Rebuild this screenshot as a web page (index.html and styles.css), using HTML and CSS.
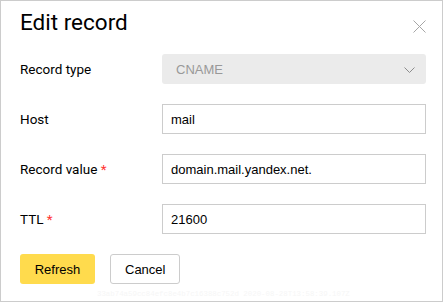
FILE: index.html
```html
<!DOCTYPE html>
<html>
<head>
<meta charset="utf-8">
<link rel="stylesheet" href="styles.css">
</head>
<body>
<div class="dialog">
  <div class="head">
    <h1 class="title">Edit record</h1>
    <button class="close" aria-label="Close">
      <svg width="13" height="13" viewBox="0 0 13 13"><path d="M0.5 0.5L12.5 12.5M12.5 0.5L0.5 12.5" stroke="#a6a6a6" stroke-width="1" fill="none"/></svg>
    </button>
  </div>
  <div class="form">
    <label class="label">Record type</label>
    <div class="select">
      <span class="select-text">CNAME</span>
      <svg class="chev" width="11" height="6" viewBox="0 0 11 6"><path d="M0.5 0.5L5.5 5.5L10.5 0.5" stroke="#8c8c8c" stroke-width="1" fill="none"/></svg>
    </div>
    <label class="label">Host</label>
    <div class="input">mail</div>
    <label class="label">Record value <span class="req">*</span></label>
    <div class="input">domain.mail.yandex.net.</div>
    <label class="label">TTL <span class="req">*</span></label>
    <div class="input">21600</div>
  </div>
  <div class="actions">
    <button class="btn btn-primary">Refresh</button>
    <button class="btn btn-default">Cancel</button>
  </div>
  <div class="stamp">33ab74a59cc84efc8e4b7c16388c752d 2020-08-28T13:58:39.107Z</div>
</div>
</body>
</html>
```
FILE: styles.css
```css
html, body {
  margin: 0;
  padding: 0;
  background: #fff;
}
.dialog {
  box-sizing: border-box;
  width: 443px;
  height: 302px;
  border: 1px solid #cccccc;
  padding: 8px 16px 0 19px;
  font-family: Roboto, "Liberation Sans", sans-serif;
  color: #000;
  position: relative;
}
.head {
  display: flex;
  justify-content: space-between;
  align-items: flex-start;
  height: 45px;
}
.title {
  margin: 0;
  font-size: 22.5px;
  font-weight: 400;
  line-height: 27px;
}
.close {
  border: 0;
  background: none;
  padding: 0;
  margin-top: 11px;
  width: 13px;
  height: 13px;
  display: block;
}
.close svg { display: block; }
.form {
  display: grid;
  grid-template-columns: 142px 1fr;
  row-gap: 20px;
  align-items: center;
}
.label {
  font-size: 13.5px;
  color: #000;
}
.req { color: #ff3333; }
.select {
  height: 30px;
  background: #ebebeb;
  border-radius: 3px;
  display: flex;
  align-items: center;
  justify-content: space-between;
  padding: 0 11px 0 14px;
  box-sizing: border-box;
}
.select-text {
  font-family: "Liberation Sans", Arial, sans-serif;
  font-size: 13px;
  color: #999;
}
.chev { display: block; margin-top: 1px; }
.input {
  box-sizing: border-box;
  height: 30px;
  border: 1px solid #cccccc;
  padding: 0 8px;
  display: flex;
  align-items: center;
  font-family: "Liberation Sans", Arial, sans-serif;
  font-size: 13px;
  color: #000;
}
.actions {
  display: flex;
  gap: 15px;
  margin-top: 20px;
}
.btn {
  box-sizing: border-box;
  height: 30px;
  font-family: "Liberation Sans", Arial, sans-serif;
  font-size: 13px;
  color: #000;
  border-radius: 3px;
  padding: 0 14px;
  margin: 0;
}
.btn-primary {
  background: #ffdb4d;
  border: 0;
  width: 75px;
}
.btn-default {
  background: #fff;
  border: 1px solid #cccccc;
  width: 70px;
}
.stamp {
  position: absolute;
  left: 96px;
  bottom: 3px;
  font-family: "Liberation Mono", monospace;
  font-size: 7.4px;
  color: #f6f6f6;
  white-space: nowrap;
}
```
